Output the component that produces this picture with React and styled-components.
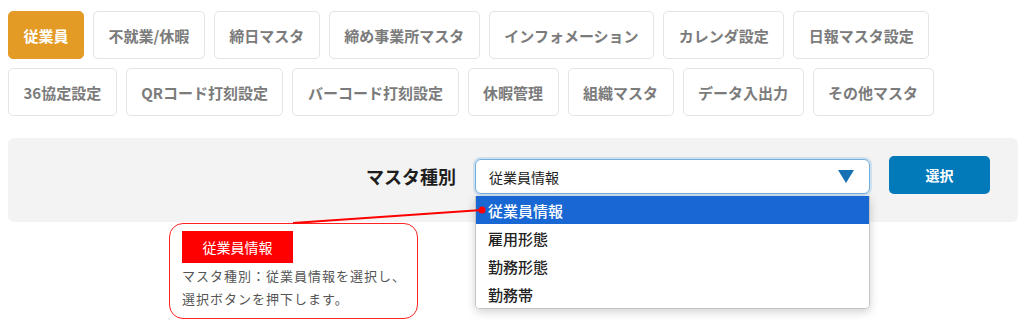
import React from "react";
import styled, { createGlobalStyle } from "styled-components";

const GlobalStyle = createGlobalStyle`
  body {
    margin: 0;
    background: #fff;
    font-family: "Noto Sans CJK JP", "Noto Sans", sans-serif;
  }
`;

const tabRows = [
  ["従業員", "不就業/休暇", "締日マスタ", "締め事業所マスタ", "インフォメーション", "カレンダ設定", "日報マスタ設定"],
  ["36協定設定", "QRコード打刻設定", "バーコード打刻設定", "休暇管理", "組織マスタ", "データ入出力", "その他マスタ"],
];

const options = ["従業員情報", "雇用形態", "勤務形態", "勤務帯"];

export default function App() {
  return (
    <>
      <GlobalStyle />
      <Page>
        <Tabs>
          {tabRows.map((row, i) => (
            <TabRow key={i}>
              {row.map((label) => (
                <Tab key={label} $active={label === "従業員"}>
                  {label}
                </Tab>
              ))}
            </TabRow>
          ))}
        </Tabs>

        <Panel>
          <Label>マスタ種別</Label>
          <SelectWrap>
            <Select>
              <span>従業員情報</span>
              <Arrow />
            </Select>
            <Dropdown>
              {options.map((o, i) => (
                <Option key={o} $selected={i === 0}>
                  {o}
                </Option>
              ))}
            </Dropdown>
          </SelectWrap>
          <Button>選択</Button>
        </Panel>

        <Connector width="1024" height="320">
          <line x1="293" y1="223" x2="482" y2="210" stroke="#f00" strokeWidth="2" />
          <circle cx="482" cy="210" r="3.5" fill="#f00" />
        </Connector>

        <Callout>
          <CalloutTitle>従業員情報</CalloutTitle>
          <CalloutText>
            マスタ種別：従業員情報を選択し、
            <br />
            選択ボタンを押下します。
          </CalloutText>
        </Callout>
      </Page>
    </>
  );
}

const Page = styled.div`
  position: relative;
  width: 1024px;
  height: 320px;
  padding: 11px 8px 0;
  box-sizing: border-box;
  overflow: hidden;
`;

const Tabs = styled.div`
  display: flex;
  flex-direction: column;
  gap: 9px;
`;

const TabRow = styled.div`
  display: flex;
  gap: 9px;
`;

const Tab = styled.div`
  height: 48px;
  padding: 0 14.5px;
  box-sizing: border-box;
  display: flex;
  align-items: center;
  border: 1px solid ${(p) => (p.$active ? "#e39b25" : "#e4e4e4")};
  border-radius: 5px;
  background: ${(p) => (p.$active ? "#e39b25" : "#fff")};
  color: ${(p) => (p.$active ? "#fff" : "#7b7b7b")};
  font-size: 15px;
  font-weight: 700;
  white-space: nowrap;
`;

const Panel = styled.div`
  margin-top: 22px;
  width: 1010px;
  height: 84px;
  box-sizing: border-box;
  padding: 18px 28px 0 0;
  background: #f3f3f3;
  border-radius: 6px;
  display: flex;
  justify-content: flex-end;
  align-items: flex-start;
  gap: 19px;
`;

const Label = styled.div`
  margin-top: 8px;
  font-size: 18px;
  font-weight: 700;
  color: #1e1e1e;
  line-height: 24px;
`;

const SelectWrap = styled.div`
  position: relative;
  margin-top: 3px;
  width: 395px;
`;

const Select = styled.div`
  height: 35px;
  box-sizing: border-box;
  padding: 0 15px 0 13px;
  display: flex;
  align-items: center;
  justify-content: space-between;
  background: #fff;
  border: 1px solid #74aedd;
  border-radius: 6px;
  box-shadow: 0 0 0 2px rgba(140, 190, 230, 0.35);
  font-size: 14px;
  color: #222;
`;

const Arrow = styled.span`
  width: 0;
  height: 0;
  border-left: 8.5px solid transparent;
  border-right: 8.5px solid transparent;
  border-top: 13px solid #1670b4;
`;

const Dropdown = styled.div`
  position: absolute;
  top: 37px;
  left: 0;
  width: 100%;
  background: #fff;
  border: 1px solid #c4c4c4;
  border-top: none;
  border-radius: 0 0 5px 5px;
  box-shadow: 0 3px 10px rgba(0, 0, 0, 0.18);
  box-sizing: border-box;
  overflow: hidden;
  z-index: 2;
`;

const Option = styled.div`
  height: 28px;
  padding-left: 12px;
  display: flex;
  align-items: center;
  font-size: 15px;
  font-weight: 500;
  background: ${(p) => (p.$selected ? "#1967d2" : "#fff")};
  color: ${(p) => (p.$selected ? "#fff" : "#222")};
`;

const Button = styled.div`
  width: 101px;
  height: 38px;
  display: flex;
  align-items: center;
  justify-content: center;
  background: #0279b8;
  border-radius: 5px;
  color: #fff;
  font-size: 14px;
  font-weight: 700;
`;

const Connector = styled.svg`
  position: absolute;
  top: 0;
  left: 0;
  pointer-events: none;
  z-index: 3;
`;

const Callout = styled.div`
  position: absolute;
  left: 169px;
  top: 223px;
  width: 249px;
  height: 96px;
  box-sizing: border-box;
  padding: 7px 12px 0;
  border: 1.5px solid #f22;
  border-radius: 14px;
  background: #fff;
  z-index: 1;
`;

const CalloutTitle = styled.div`
  width: 111px;
  height: 32px;
  display: flex;
  align-items: center;
  justify-content: center;
  background: #f00;
  color: #fff;
  font-size: 14px;
`;

const CalloutText = styled.div`
  margin-top: 1px;
  font-size: 13px;
  letter-spacing: 1px;
  line-height: 23px;
  color: #555;
  white-space: nowrap;
`;
